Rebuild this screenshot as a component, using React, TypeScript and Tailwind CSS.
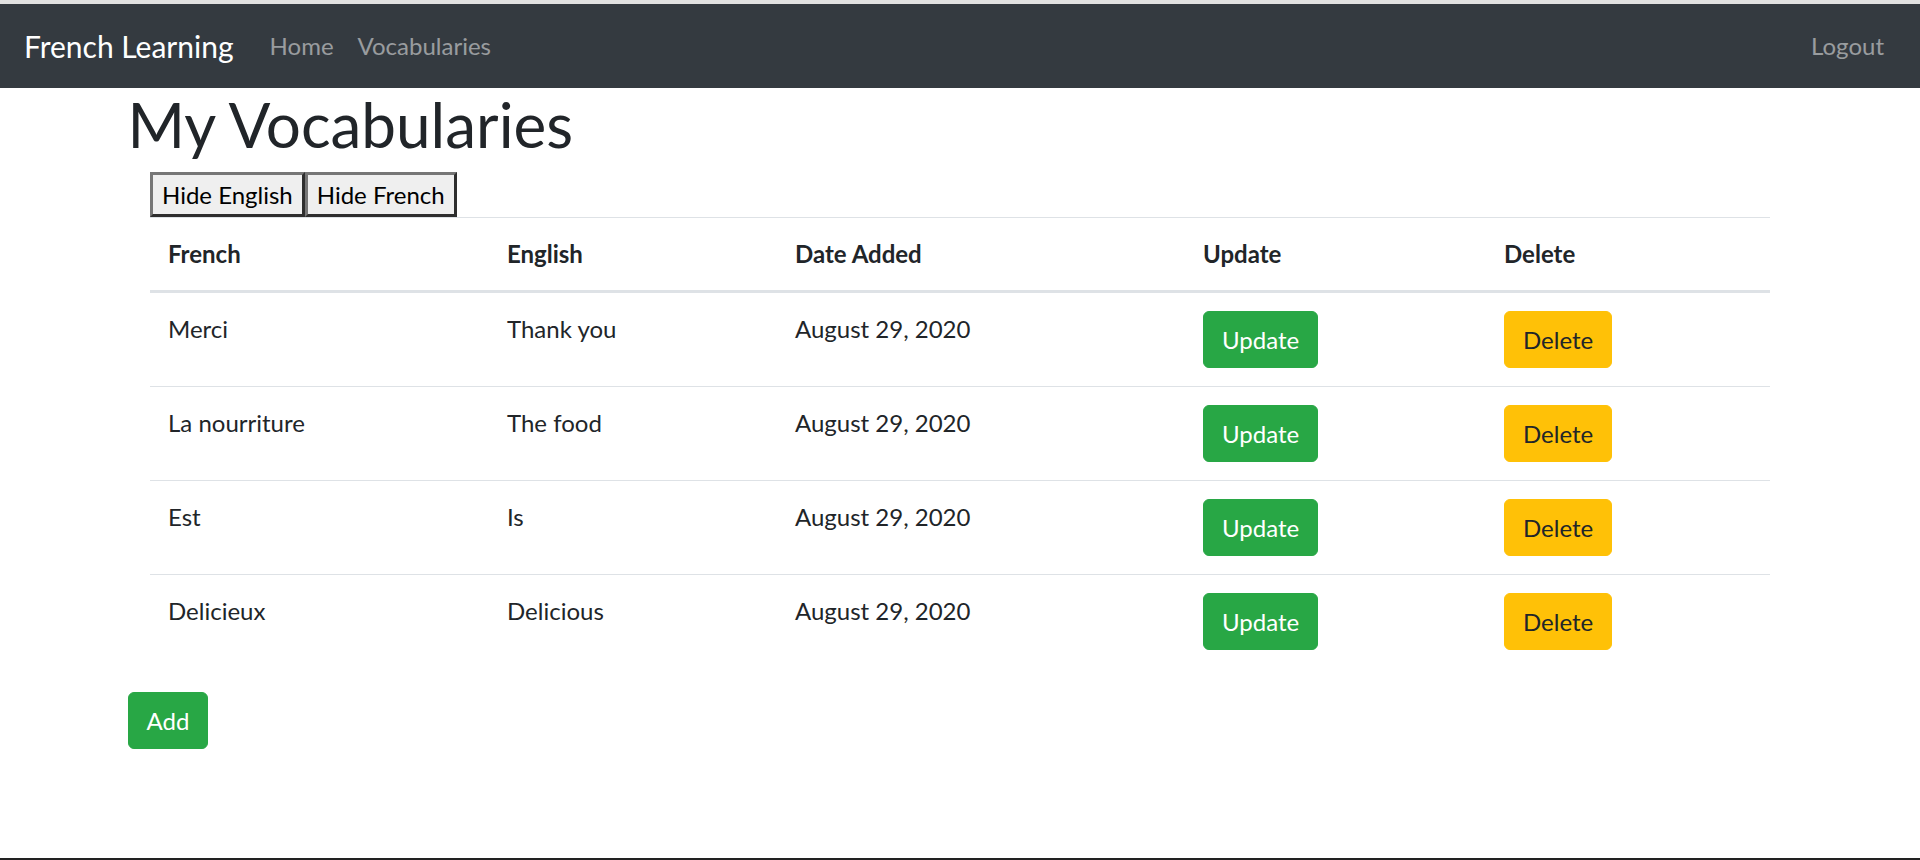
const words = [
  { french: "Merci", english: "Thank you", date: "August 29, 2020" },
  { french: "La nourriture", english: "The food", date: "August 29, 2020" },
  { french: "Est", english: "Is", date: "August 29, 2020" },
  { french: "Delicieux", english: "Delicious", date: "August 29, 2020" },
];

const btn = "inline-block rounded-[6px] border px-[18px] py-[9.5px] text-[24px] leading-[36px]";
const hideBtn =
  "border-[3px] border-t-[#767676] border-l-[#767676] border-r-[#2e2e2e] border-b-[#2e2e2e] bg-[#efefef] px-[9px] py-[1.5px] text-[24px] leading-[36px] text-black";

function Navbar() {
  return (
    <nav className="flex h-[84px] items-center bg-[#343a40] px-[24px]">
      <a className="mr-[24px] text-[30px] leading-[45px] text-white">French Learning</a>
      <a className="px-[12px] text-[24px] leading-[36px] text-white/50">Home</a>
      <a className="px-[12px] text-[24px] leading-[36px] text-white/50">Vocabularies</a>
      <a className="ml-auto px-[12px] text-[24px] leading-[36px] text-white/50">Logout</a>
    </nav>
  );
}

export default function App() {
  return (
    <div className="flex min-h-[860px] flex-col border-b-2 border-[#222] bg-white font-['Lato',sans-serif] text-[#212529]">
      <div className="h-[4px] bg-[#e1e1e1]" />
      <Navbar />

      <main className="mx-auto w-[1710px] px-[22.5px]">
        <h1 className="mb-[12px] text-[62px] leading-[72px]">My Vocabularies</h1>

        <div className="px-[22.5px]">
          <div className="flex">
            <button className={hideBtn}>Hide English</button>
            <button className={hideBtn}>Hide French</button>
          </div>

          <table className="mb-[24px] w-full table-fixed border-collapse text-[24px] leading-[36px]">
            <colgroup>
              <col className="w-[339px]" />
              <col className="w-[288px]" />
              <col className="w-[408px]" />
              <col className="w-[301px]" />
              <col className="w-[284px]" />
            </colgroup>
            <thead>
              <tr className="border-t-[1.5px] border-b-[3px] border-[#dee2e6]">
                {["French", "English", "Date Added", "Update", "Delete"].map((h) => (
                  <th key={h} className="p-[18px] text-left font-bold">
                    {h}
                  </th>
                ))}
              </tr>
            </thead>
            <tbody>
              {words.map((w, i) => (
                <tr key={w.french} className={i > 0 ? "border-t-[1.5px] border-[#dee2e6]" : ""}>
                  <td className="p-[18px] align-top">{w.french}</td>
                  <td className="p-[18px] align-top">{w.english}</td>
                  <td className="p-[18px] align-top">{w.date}</td>
                  <td className="p-[18px] align-top">
                    <button className={`${btn} border-[#28a745] bg-[#28a745] text-white`}>Update</button>
                  </td>
                  <td className="p-[18px] align-top">
                    <button className={`${btn} border-[#ffc107] bg-[#ffc107] text-[#212529]`}>Delete</button>
                  </td>
                </tr>
              ))}
            </tbody>
          </table>
        </div>

        <button className={`${btn} border-[#28a745] bg-[#28a745] text-white`}>Add</button>
      </main>

      <div className="flex-1" />
    </div>
  );
}
